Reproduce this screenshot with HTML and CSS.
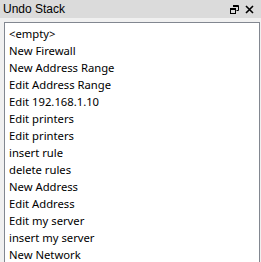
FILE: index.html
```html
<!DOCTYPE html>
<html>
<head>
<meta charset="utf-8">
<link rel="stylesheet" href="styles.css">
</head>
<body>
<div class="dock">
  <div class="titlebar">
    <span class="title">Undo Stack</span>
    <span class="buttons">
      <svg class="btn" width="9" height="9" viewBox="0 0 9 9">
        <path d="M3 0.5H8.5V5.5H6.5" fill="none" stroke="#000" stroke-width="1"/>
        <path d="M3 1.5H8" stroke="#000" stroke-width="1"/>
        <rect x="0.5" y="3.5" width="5" height="5" fill="none" stroke="#000" stroke-width="1"/>
        <path d="M0 4.5H6" stroke="#000" stroke-width="1"/>
      </svg>
      <svg class="btn" width="9" height="9" viewBox="0 0 9 9">
        <path d="M1 1L8 8M8 1L1 8" stroke="#000" stroke-width="1.6"/>
      </svg>
    </span>
  </div>
  <div class="content">
    <ul class="list">
      <li>&lt;empty&gt;</li>
      <li>New Firewall</li>
      <li>New Address Range</li>
      <li>Edit Address Range</li>
      <li>Edit 192.168.1.10</li>
      <li>Edit printers</li>
      <li>Edit printers</li>
      <li>insert rule</li>
      <li>delete rules</li>
      <li>New Address</li>
      <li>Edit Address</li>
      <li>Edit my server</li>
      <li>insert my server</li>
      <li>New Network</li>
    </ul>
  </div>
</div>
</body>
</html>
```
FILE: styles.css
```css
html, body {
  margin: 0;
  padding: 0;
  background: #f0f0f0;
  overflow: hidden;
}
.dock {
  width: 261px;
  height: 262px;
  display: flex;
  flex-direction: column;
  font-family: "Noto Sans", sans-serif;
}
.titlebar {
  height: 18px;
  background: #dbdbdb;
  display: flex;
  align-items: center;
  justify-content: space-between;
  padding: 0 7px 0 3px;
  flex: none;
}
.title {
  font-family: "Liberation Sans", sans-serif;
  font-size: 12px;
  color: #000;
}
.buttons {
  display: flex;
  gap: 6px;
  align-items: center;
}
.btn {
  display: block;
}
.content {
  flex: 1;
  padding: 4px 1px 0 4px;
  display: flex;
  min-height: 0;
}
.list {
  flex: 1;
  margin: 0;
  padding: 3px 0 0 4px;
  list-style: none;
  background: #fff;
  border: 1px solid #828790;
  border-bottom: none;
  overflow: hidden;
}
.list li {
  font-family: "Noto Sans", sans-serif;
  font-size: 11.25px;
  height: 17px;
  line-height: 16px;
  color: #000;
  white-space: nowrap;
}
```
